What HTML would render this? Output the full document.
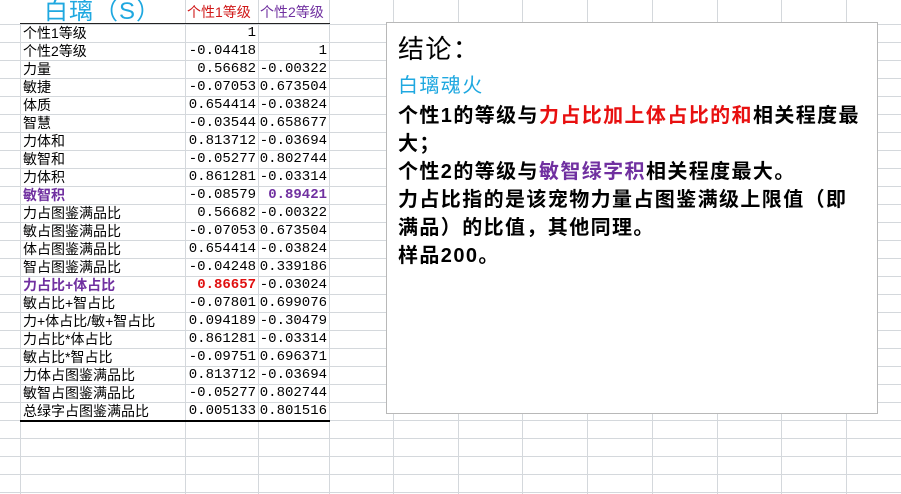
<!DOCTYPE html>
<html><head><meta charset="utf-8"><style>
body{margin:0;width:901px;height:494px;overflow:hidden;background:#fff;position:relative;font-family:"Liberation Sans","Noto Sans CJK SC",sans-serif;}
.v{position:absolute;top:0;width:1px;height:494px;background:#d4d8dc}
.h{position:absolute;left:0;width:901px;height:1px;background:#d4d8dc}
.r{position:absolute;height:18px;line-height:18px;font-size:14px;white-space:nowrap}
.n{font-family:"Liberation Mono","Noto Sans CJK SC",monospace;text-align:right;font-size:14px}
#box{position:absolute;left:386px;top:22px;width:490px;height:390px;background:#fff;border:1px solid #b8b8b8;font-family:"Liberation Sans","Noto Sans CJK SC",sans-serif}
#box div{position:absolute;left:11px;white-space:nowrap;font-weight:bold;font-size:20px;letter-spacing:1.4px}
</style></head><body>
<div class="v" style="left:20px"></div><div class="v" style="left:185px"></div><div class="v" style="left:258px"></div><div class="v" style="left:329px"></div>
<div class="v" style="left:393px"></div><div class="v" style="left:458px"></div><div class="v" style="left:522px"></div><div class="v" style="left:587px"></div><div class="v" style="left:652px"></div><div class="v" style="left:717px"></div><div class="v" style="left:781px"></div><div class="v" style="left:846px"></div>
<script>
for(let i=0;i<27;i++){let d=document.createElement('div');d.className='h';d.style.top=(24+18*i)+'px';document.body.appendChild(d);}
const rows=[["个性1等级","1",""],["个性2等级","-0.04418","1"],["力量","0.56682","-0.00322"],["敏捷","-0.07053","0.673504"],["体质","0.654414","-0.03824"],["智慧","-0.03544","0.658677"],["力体和","0.813712","-0.03694"],["敏智和","-0.05277","0.802744"],["力体积","0.861281","-0.03314"],["敏智积","-0.08579","0.89421"],["力占图鉴满品比","0.56682","-0.00322"],["敏占图鉴满品比","-0.07053","0.673504"],["体占图鉴满品比","0.654414","-0.03824"],["智占图鉴满品比","-0.04248","0.339186"],["力占比+体占比","0.86657","-0.03024"],["敏占比+智占比","-0.07801","0.699076"],["力+体占比/敏+智占比","0.094189","-0.30479"],["力占比*体占比","0.861281","-0.03314"],["敏占比*智占比","-0.09751","0.696371"],["力体占图鉴满品比","0.813712","-0.03694"],["敏智占图鉴满品比","-0.05277","0.802744"],["总绿字占图鉴满品比","0.005133","0.801516"]];
rows.forEach((r,i)=>{let y=24+18*i;
let a=document.createElement('div');a.className='r';a.style.left='23px';a.style.top=y+'px';a.textContent=r[0];
let b=document.createElement('div');b.className='r n';b.style.left='186px';b.style.width='70px';b.style.top=y+'px';b.textContent=r[1];
let c=document.createElement('div');c.className='r n';c.style.left='259px';c.style.width='68px';c.style.top=y+'px';c.textContent=r[2];
if(i==9){a.style.color='#7030a0';a.style.fontWeight='bold';c.style.color='#7030a0';c.style.fontWeight='bold';}
if(i==14){a.style.color='#7030a0';a.style.fontWeight='bold';b.style.color='#e01010';b.style.fontWeight='bold';}
[a,b,c].forEach(e=>document.body.appendChild(e));});
</script>
<div style="position:absolute;left:20px;top:0;width:166px;height:24px;background:#fff"></div>
<div style="position:absolute;left:186px;top:0;width:143px;height:23px;background:#fff"></div>
<div style="position:absolute;left:185px;top:0;width:1px;height:24px;background:#d4d8dc"></div>
<div style="position:absolute;left:258px;top:0;width:1px;height:24px;background:#d4d8dc"></div>
<div style="position:absolute;left:20px;top:-1px;width:165px;text-align:center;font-size:24px;line-height:26px;color:#1fa8e0;letter-spacing:1px">白璃（S）</div>
<div style="position:absolute;left:187px;top:2px;font-size:14px;color:#d01818">个性1等级</div>
<div style="position:absolute;left:260px;top:2px;font-size:14px;color:#7030a0">个性2等级</div>
<div style="position:absolute;left:20px;top:23px;width:310px;height:1px;background:#222"></div>
<div style="position:absolute;left:20px;top:420px;width:310px;height:2px;background:#000"></div>
<div id="box">
<div style="top:6px;font-weight:normal;font-size:26px">结论：</div>
<div style="top:46px;font-weight:normal;color:#1fa8e0">白璃魂火</div>
<div style="top:76px">个性1的等级与<span style="color:#e81010">力占比加上体占比的和</span>相关程度最</div>
<div style="top:104px">大；</div>
<div style="top:132px">个性2的等级与<span style="color:#7030a0">敏智绿字积</span>相关程度最大。</div>
<div style="top:160px">力占比指的是该宠物力量占图鉴满级上限值（即</div>
<div style="top:188px">满品）的比值，其他同理。</div>
<div style="top:216px">样品200。</div>
</div>
</body></html>
